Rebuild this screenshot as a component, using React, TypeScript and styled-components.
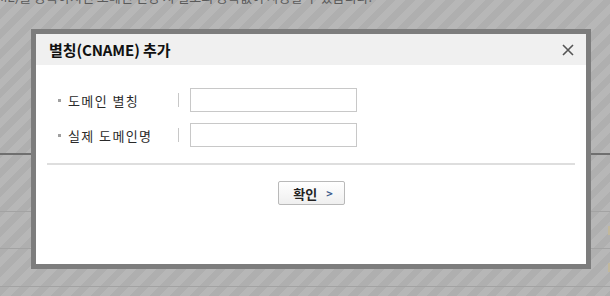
import styled, { createGlobalStyle } from 'styled-components'

const GlobalStyle = createGlobalStyle`
  html, body {
    margin: 0;
    padding: 0;
    background: #b4b4b4;
  }
  body {
    font-family: "Noto Sans CJK KR", "Noto Sans", sans-serif;
    color: #333;
  }
`

const Page = styled.div`
  position: relative;
  width: 610px;
  height: 296px;
  overflow: hidden;
  background-color: #b5b5b5;
  background-image: repeating-linear-gradient(
    135deg,
    #b7b7b7 0px,
    #b7b7b7 7px,
    #afafaf 7px,
    #afafaf 14px
  );
`

const Notice = styled.div`
  display: flex;
  justify-content: flex-end;
  width: 372px;
  height: 4px;
  overflow: hidden;
  white-space: nowrap;
  font-size: 13px;
  line-height: 13px;
  color: #5a5a5a;
`

const NoticeText = styled.span`
  flex-shrink: 0;
  margin-top: -10px;
`

const SectionRule = styled.div`
  margin-top: 149px;
  height: 2px;
  background: #6f6f6f;
`

const ListRow = styled.div<{ $height: number }>`
  display: flex;
  justify-content: flex-end;
  align-items: center;
  height: ${({ $height }) => $height}px;
  border-bottom: 1px solid #a3a3a3;
`

const RowTab = styled.span`
  width: 2px;
  height: 9px;
  background: #c2b89c;
`

const Modal = styled.div`
  position: absolute;
  left: 31px;
  top: 29px;
  width: 560px;
  height: 240px;
  box-sizing: border-box;
  border: 5px solid #7d7d7d;
  background: #fff;
  display: flex;
  flex-direction: column;
`

const ModalHeader = styled.div`
  display: flex;
  align-items: center;
  justify-content: space-between;
  height: 31px;
  padding: 0 9px 0 13px;
  background: #f0f0f0;
`

const ModalTitle = styled.h2`
  margin: 0;
  font-size: 15px;
  font-weight: 700;
  color: #111;
  letter-spacing: -0.1px;
`

const CloseButton = styled.button`
  display: flex;
  align-items: center;
  justify-content: center;
  width: 18px;
  height: 18px;
  padding: 0;
  border: 0;
  background: transparent;
  cursor: pointer;
`

const ModalBody = styled.div`
  display: flex;
  flex-direction: column;
  gap: 11px;
  padding: 23px 0 0 22px;
`

const FieldRow = styled.div`
  display: flex;
  align-items: center;
  height: 24px;
`

const Bullet = styled.span`
  width: 3px;
  height: 3px;
  margin-right: 7px;
  background: #a0a0a0;
`

const FieldLabel = styled.label`
  width: 110px;
  font-size: 13px;
  color: #2a2a2a;
  letter-spacing: 1.4px;
`

const LabelDivider = styled.span`
  width: 1px;
  height: 14px;
  margin-right: 11px;
  background: #c8c8c8;
`

const TextInput = styled.input`
  width: 167px;
  height: 24px;
  box-sizing: border-box;
  border: 1px solid #c8c8c8;
  padding: 0 4px;
  font-size: 12px;
  outline: none;
`

const Divider = styled.hr`
  margin: 16px 11px 0;
  border: 0;
  height: 2px;
  background: #dedede;
`

const Footer = styled.div`
  display: flex;
  justify-content: center;
  padding-top: 16px;
`

const ConfirmButton = styled.button`
  display: flex;
  align-items: center;
  justify-content: center;
  gap: 9px;
  width: 67px;
  height: 24px;
  box-sizing: border-box;
  padding: 0 0 0 4px;
  border: 1px solid #b9b9b9;
  border-radius: 2px;
  background: linear-gradient(#ffffff, #efefef);
  font-family: inherit;
  font-size: 13px;
  font-weight: 700;
  color: #222;
  cursor: pointer;
`

const Chevron = styled.span`
  font-size: 11px;
  font-weight: 700;
  color: #3b5b8c;
  margin-top: -1px;
`

const fields = ['도메인 별칭', '실제 도메인명']

export default function App() {
  return (
    <>
      <GlobalStyle />
      <Page>
        <Notice>
          <NoticeText>별칭(CNAME)을 등록하시면 도메인 변경 시 별도의 등록없이 사용할 수 있습니다.</NoticeText>
        </Notice>
        <SectionRule />
        <ListRow $height={56} />
        <ListRow $height={36}>
          <RowTab />
        </ListRow>
        <ListRow $height={37}>
          <RowTab />
        </ListRow>

        <Modal>
          <ModalHeader>
            <ModalTitle>별칭(CNAME) 추가</ModalTitle>
            <CloseButton aria-label="닫기">
              <svg width="12" height="12" viewBox="0 0 12 12">
                <path d="M1 1 L11 11 M11 1 L1 11" stroke="#555" strokeWidth="1.6" />
              </svg>
            </CloseButton>
          </ModalHeader>
          <ModalBody>
            {fields.map((label) => (
              <FieldRow key={label}>
                <Bullet />
                <FieldLabel>{label}</FieldLabel>
                <LabelDivider />
                <TextInput type="text" />
              </FieldRow>
            ))}
          </ModalBody>
          <Divider />
          <Footer>
            <ConfirmButton>
              확인
              <Chevron>&gt;</Chevron>
            </ConfirmButton>
          </Footer>
        </Modal>
      </Page>
    </>
  )
}
